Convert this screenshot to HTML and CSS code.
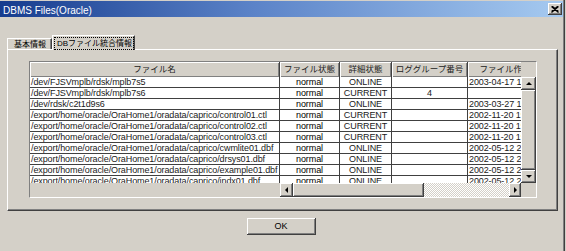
FILE: index.html
```html
<!DOCTYPE html>
<html lang="ja">
<head>
  <meta charset="UTF-8">
  <title>DBMS Files(Oracle)</title>
  <link rel="stylesheet" href="styles.css">
</head>
<body>
  <div class="window">
    <div class="titlebar">
      <span class="title">DBMS Files(Oracle)</span>
      <div class="close">
        <svg width="8" height="7" viewBox="0 0 8 7"><path d="M0.5 0.5 L7.5 6.5 M1.5 0.5 L7.5 5.5 M7.5 0.5 L0.5 6.5 M6.5 0.5 L0.5 5.5" stroke="#000" stroke-width="1.2" fill="none"/></svg>
      </div>
    </div>
    <div class="content">
      <div class="tabs">
        <div class="tab">基本情報</div>
        <div class="tab active"><span class="focus">DBファイル統合情報</span></div>
      </div>
      <div class="panel">
        <div class="table">
          <!-- header -->
          <div class="head">
            <div class="h">ファイル名</div>
            <div class="h">ファイル状態</div>
            <div class="h">詳細状態</div>
            <div class="h">ロググループ番号</div>
            <div class="h">ファイル作成日時</div>
          </div>
          <div class="head-corner"></div>

          <!-- rows -->
          <div class="rows">
            <div class="row"><div class="c name">/dev/FJSVmplb/rdsk/mplb7s5</div><div class="c st">normal</div><div class="c dt">ONLINE</div><div class="c grp"></div><div class="c date">2003-04-17 15:32:08</div></div>
            <div class="row"><div class="c name">/dev/FJSVmplb/rdsk/mplb7s6</div><div class="c st">normal</div><div class="c dt">CURRENT</div><div class="c grp">4</div><div class="c date"></div></div>
            <div class="row"><div class="c name">/dev/rdsk/c2t1d9s6</div><div class="c st">normal</div><div class="c dt">ONLINE</div><div class="c grp"></div><div class="c date">2003-03-27 14:05:51</div></div>
            <div class="row"><div class="c name">/export/home/oracle/OraHome1/oradata/caprico/control01.ctl</div><div class="c st">normal</div><div class="c dt">CURRENT</div><div class="c grp"></div><div class="c date">2002-11-20 19:44:10</div></div>
            <div class="row"><div class="c name">/export/home/oracle/OraHome1/oradata/caprico/control02.ctl</div><div class="c st">normal</div><div class="c dt">CURRENT</div><div class="c grp"></div><div class="c date">2002-11-20 19:44:10</div></div>
            <div class="row"><div class="c name">/export/home/oracle/OraHome1/oradata/caprico/control03.ctl</div><div class="c st">normal</div><div class="c dt">CURRENT</div><div class="c grp"></div><div class="c date">2002-11-20 19:44:11</div></div>
            <div class="row"><div class="c name">/export/home/oracle/OraHome1/oradata/caprico/cwmlite01.dbf</div><div class="c st">normal</div><div class="c dt">ONLINE</div><div class="c grp"></div><div class="c date">2002-05-12 21:09:36</div></div>
            <div class="row"><div class="c name">/export/home/oracle/OraHome1/oradata/caprico/drsys01.dbf</div><div class="c st">normal</div><div class="c dt">ONLINE</div><div class="c grp"></div><div class="c date">2002-05-12 21:09:36</div></div>
            <div class="row"><div class="c name">/export/home/oracle/OraHome1/oradata/caprico/example01.dbf</div><div class="c st">normal</div><div class="c dt">ONLINE</div><div class="c grp"></div><div class="c date">2002-05-12 21:09:37</div></div>
            <div class="row"><div class="c name">/export/home/oracle/OraHome1/oradata/caprico/indx01.dbf</div><div class="c st">normal</div><div class="c dt">ONLINE</div><div class="c grp"></div><div class="c date">2002-05-12 21:09:37</div></div>
          </div>

          <!-- vertical scrollbar -->
          <div class="vscroll">
            <div class="btn arr-up"></div>
            <div class="thumb"></div>
            <div class="btn arr-down"></div>
          </div>

          <!-- bottom: frozen part has no scrollbar -->
          <div class="fill"></div>
          <div class="hscroll">
            <div class="btn arr-left"></div>
            <div class="hthumb"></div>
            <div class="track"></div>
            <div class="btn arr-right"></div>
          </div>
          <div class="corner"></div>
        </div>
      </div>
      <div class="actions">
        <div class="ok">OK</div>
      </div>
    </div>
  </div>
</body>
</html>
```

FILE: styles.css
```css
body {
  margin: 0;
  padding: 0;
  background: #d4d0c8;
  font-family: 'Liberation Sans', 'Noto Sans CJK JP', sans-serif;
  color: #000;
}
.window {
  width: 565px;
  height: 251px;
  box-sizing: border-box;
  padding-top: 1px;
  background: #d4d0c8;
  border-right: 1px solid #404040;
  box-shadow: inset -1px 0 #808080;
}
.titlebar {
  height: 16px;
  width: 563px;
  display: flex;
  align-items: center;
  justify-content: space-between;
  background: linear-gradient(90deg, #163c8e, #5b83c8 45%, #a6caf0);
}
.title {
  color: #fff;
  font-size: 10px;
  padding: 3px 0 0 3px;
}
.close {
  width: 14px;
  height: 12px;
  margin-right: 1px;
  box-sizing: border-box;
  background: #d4d0c8;
  display: flex;
  align-items: center;
  justify-content: center;
  box-shadow: inset -1px -1px #404040, inset 1px 1px #fff, inset -2px -2px #808080;
}
.content {
  padding: 18px 0 0 7px;
}

/* tabs */
.tabs {
  display: flex;
  align-items: flex-end;
  height: 14px;
  font-size: 8px;
}
.tab {
  height: 11px;
  line-height: 11px;
  box-sizing: border-box;
  padding: 0 5px 0 6px;
  border-top: 1px solid #fff;
  border-left: 1px solid #fff;
  border-right: 1px solid #404040;
  box-shadow: inset -1px 0 #808080;
  white-space: nowrap;
}
.tab.active {
  height: 15px;
  margin-bottom: -1px;
  padding: 2px 1px 0 2px;
  line-height: 11px;
  background: #d4d0c8;
  position: relative;
  z-index: 1;
}
.focus {
  display: block;
  outline: 1px dotted #000;
  padding: 0 1px 0 2px;
  height: 11px;
}

/* panel */
.panel {
  width: 551px;
  height: 162px;
  box-sizing: border-box;
  padding: 11px 0 0 21px;
  border: 1px solid #fff;
  border-right-color: #404040;
  border-bottom-color: #404040;
  box-shadow: inset -1px -1px #808080;
}
.table {
  width: 508px;
  height: 137px;
  box-sizing: border-box;
  border: 1px solid #808080;
  border-right-color: #fff;
  border-bottom-color: #fff;
  display: grid;
  grid-template-columns: 250px 241px 15px;
  grid-template-rows: 15px 106px 14px;
  font-size: 9px;
}
.head {
  grid-column: 1 / 3;
  display: grid;
  grid-template-columns: 250px 60px 52px 76px 92px;
  overflow: hidden;
  font-size: 8.5px;
}
.h {
  line-height: 15px;
  text-align: center;
  white-space: nowrap;
  color: #222;
  box-shadow: inset 1px 1px #fff, inset -1px -1px #808080;
  border-right: 1px solid #404040;
  box-sizing: border-box;
}
.head-corner {
  background: #d4d0c8;
}
.rows {
  grid-column: 1 / 3;
  overflow: hidden;
  background: #fff;
}
.row {
  display: grid;
  grid-template-columns: 250px 60px 52px 76px 92px;
  height: 11px;
}
.c {
  line-height: 10px;
  height: 11px;
  box-sizing: border-box;
  border-right: 1px solid #404040;
  border-bottom: 1px solid #404040;
  white-space: nowrap;
  overflow: hidden;
  letter-spacing: -0.1px;
  color: #1a1a1a;
}
.name { padding-left: 1px; }
.st, .dt, .grp { text-align: center; }
.st { color: #000; }
.date { padding-left: 1px; border-right: 0; }

/* scrollbars */
.btn {
  background: #d4d0c8;
  box-shadow: inset -1px -1px #404040, inset 1px 1px #fff, inset -2px -2px #808080;
  display: flex;
  align-items: center;
  justify-content: center;
}
.btn::before {
  content: "";
  width: 0;
  height: 0;
}
.arr-up::before {
  border-left: 3px solid transparent;
  border-right: 3px solid transparent;
  border-bottom: 3px solid #000;
}
.arr-down::before {
  border-left: 3px solid transparent;
  border-right: 3px solid transparent;
  border-top: 3px solid #000;
}
.arr-left::before {
  border-top: 3px solid transparent;
  border-bottom: 3px solid transparent;
  border-right: 3px solid #000;
}
.arr-right::before {
  border-top: 3px solid transparent;
  border-bottom: 3px solid transparent;
  border-left: 3px solid #000;
}
.vscroll {
  display: flex;
  flex-direction: column;
}
.vscroll .btn { height: 13px; }
.thumb {
  flex: 1;
  background: #d4d0c8;
  box-shadow: inset -1px -1px #404040, inset 1px 1px #fff, inset -2px -2px #808080;
}
.fill, .corner {
  background: #d4d0c8;
}
.hscroll {
  display: flex;
}
.hscroll .btn { width: 13px; }
.hscroll .arr-right { width: 12px; }
.hthumb {
  width: 131px;
  background: #d4d0c8;
  box-shadow: inset -1px -1px #404040, inset 1px 1px #fff, inset -2px -2px #808080;
}
.track {
  flex: 1;
  background: repeating-conic-gradient(#fff 0 25%, #d4d0c8 0 50%) 0 0 / 2px 2px;
}

/* button row */
.actions {
  display: flex;
  justify-content: center;
  padding: 7px 9px 0 0;
}
.ok {
  width: 69px;
  height: 17px;
  line-height: 17px;
  text-align: center;
  font-size: 9px;
  background: #d4d0c8;
  box-shadow: inset -1px -1px #404040, inset 1px 1px #fff, inset -2px -2px #808080;
}
```
